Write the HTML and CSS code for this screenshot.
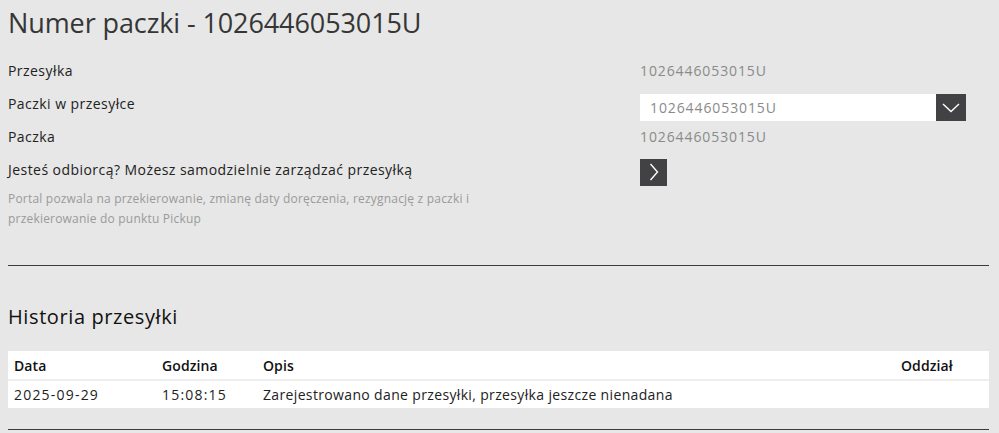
FILE: index.html
```html
<!DOCTYPE html>
<html lang="pl">
<head>
<meta charset="utf-8">
<title>Numer paczki</title>
<link rel="stylesheet" href="styles.css">
</head>
<body>
<div class="page">
  <h1 class="title">Numer paczki - 1026446053015U</h1>
  <div class="info">
    <div class="label">Przesyłka</div>
    <div class="value num">1026446053015U</div>
    <div class="label">Paczki w przesyłce</div>
    <div class="value">
      <div class="select">
        <span class="select-text num">1026446053015U</span>
        <span class="select-btn"><svg width="18" height="10" viewBox="0 0 18 10"><path d="M1 1 L9 8.5 L17 1" fill="none" stroke="#fff" stroke-width="1.4"/></svg></span>
      </div>
    </div>
    <div class="label">Paczka</div>
    <div class="value num">1026446053015U</div>
    <div class="label">Jesteś odbiorcą? Możesz samodzielnie zarządzać przesyłką</div>
    <div class="value">
      <span class="go-btn"><svg width="10" height="18" viewBox="0 0 10 18"><path d="M1.5 1 L8.5 9 L1.5 17" fill="none" stroke="#fff" stroke-width="1.4"/></svg></span>
    </div>
  </div>
  <p class="desc">Portal pozwala na przekierowanie, zmianę daty doręczenia, rezygnację z paczki i przekierowanie do punktu Pickup</p>
  <hr class="sep">
  <h2 class="subtitle">Historia przesyłki</h2>
  <table class="history">
    <thead>
      <tr><th class="c-date">Data</th><th class="c-time">Godzina</th><th class="c-desc">Opis</th><th class="c-dep">Oddział</th></tr>
    </thead>
    <tbody>
      <tr><td class="num">2025-09-29</td><td class="num">15:08:15</td><td>Zarejestrowano dane przesyłki, przesyłka jeszcze nienadana</td><td></td></tr>
    </tbody>
  </table>
  <hr class="sep sep-bottom">
</div>
</body>
</html>
```

FILE: styles.css
```css
html, body {
  margin: 0;
  padding: 0;
  background: #e6e7e6;
}
body {
  font-family: "Open Sans", "Liberation Sans", sans-serif;
  color: #222;
}
.page {
  padding: 0 10px 0 8px;
}
.title {
  margin: 0;
  padding-top: 6px;
  font-size: 27px;
  line-height: 34px;
  font-weight: 400;
  color: #363636;
  letter-spacing: -0.1px;
}
.info {
  display: grid;
  grid-template-columns: 632px 1fr;
  grid-auto-rows: 33px;
  margin-top: 14px;
  align-items: center;
}
.label {
  font-size: 14px;
  color: #222;
  letter-spacing: 0.45px;
}
.value {
  font-size: 14px;
  color: #8a8a8a;
  display: flex;
  align-items: center;
}
.num {
  letter-spacing: 0.9px;
}
.select {
  display: flex;
  width: 326px;
  height: 27px;
  margin-top: 8px;
}
.select-text {
  flex: 1;
  background: #fff;
  padding-left: 10px;
  line-height: 27px;
  color: #8a8a8a;
}
.select-btn, .go-btn {
  width: 30px;
  height: 27px;
  background: #424143;
  display: flex;
  align-items: center;
  justify-content: center;
}
.go-btn {
  width: 27px;
  margin-top: 5px;
}
.desc {
  margin: 3px 0 0;
  width: 480px;
  font-size: 12px;
  line-height: 20px;
  color: #9a9a9a;
  letter-spacing: 0.2px;
}
.sep {
  border: 0;
  height: 1px;
  background: #3c3c3c;
  margin: 36px 0 0;
}
.subtitle {
  margin: 37px 0 0;
  font-size: 20px;
  line-height: 28px;
  font-weight: 500;
  color: #111;
  letter-spacing: 0.6px;
}
.history {
  margin-top: 20px;
  width: 100%;
  border-collapse: collapse;
  background: #fff;
  font-size: 14px;
}
.history th {
  text-align: left;
  font-weight: 600;
  height: 28px;
  padding: 0 6px;
  border-bottom: 2px solid #eeeeee;
  color: #111;
  letter-spacing: 0.1px;
}
.history td {
  height: 27px;
  padding: 0 6px;
  color: #222;
  letter-spacing: 0.35px;
}
.history td.num {
  letter-spacing: 1.2px;
}
.c-date { width: 136px; }
.c-time { width: 89px; }
.c-dep { width: 82px; }
.sep-bottom {
  margin-top: 21px;
}
```
